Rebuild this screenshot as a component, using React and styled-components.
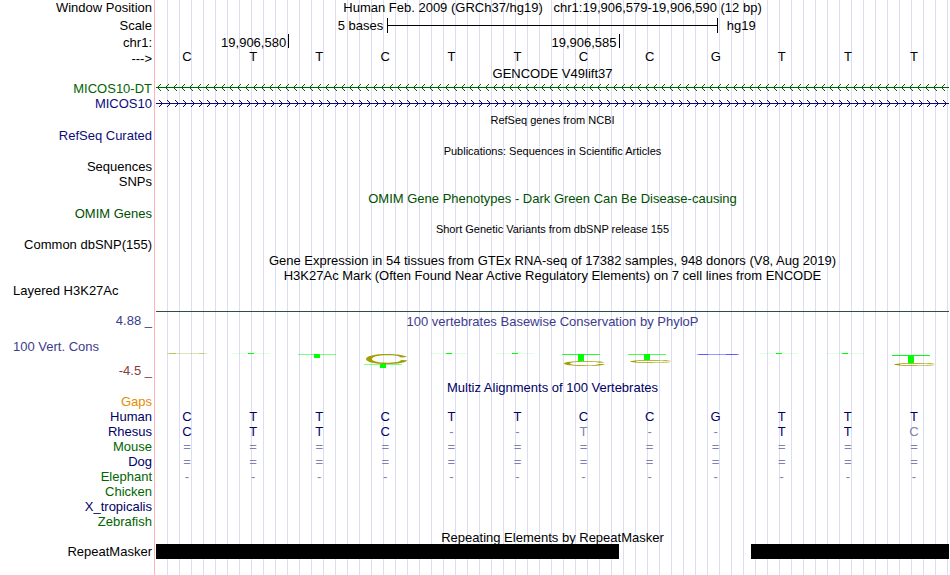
import React from "react";
import styled, { createGlobalStyle } from "styled-components";

const GlobalStyle = createGlobalStyle`
  * { box-sizing: border-box; }
  body {
    margin: 0;
    background: #fff;
    color: #000;
    font-family: "Liberation Sans", Arial, Helvetica, sans-serif;
    font-size: 13px;
    line-height: 15px;
  }
`;

const navy = "#0c0c78";
const green = "#006400";
const alignNavy = "#000064";
const slate = "#3c3c8c";
const muted = "#8080b2";

const Browser = styled.main`
  min-height: 100vh;
  padding: 0 1px 16px 0;
  background:
    linear-gradient(#ffb4b4, #ffb4b4) 154px 0 / 1px 100% no-repeat,
    linear-gradient(#fff, #fff) 0 0 / 156px 100% no-repeat,
    repeating-linear-gradient(to right, #fff 0 11px, #dcdcf5 11px 12px);
`;

const Row = styled.section`
  display: grid;
  grid-template-columns: 156px minmax(0, 1fr);
  height: ${(p) => p.$height || 15}px;
  align-items: center;
`;

const Label = styled.div`
  padding: ${(p) => (p.$left ? "0 0 2px 13px" : "0 4px 2px 0")};
  text-align: ${(p) => (p.$left ? "left" : "right")};
  color: ${(p) => p.$color || "#000"};
  white-space: nowrap;
`;

const RulerLabel = styled(Label)`
  padding-bottom: 0;
`;

const Title = styled.h2`
  grid-column: 2;
  margin: 0;
  font-weight: 400;
  font-size: ${(p) => (p.$small ? 11 : 13)}px;
  color: ${(p) => p.$color || "#000"};
  text-align: center;
  white-space: pre;
`;

const Position = styled(Title)`
  align-self: start;
`;

const Track = styled.div`
  display: grid;
  grid-template-columns: repeat(24, minmax(0, 1fr));
  height: 100%;
  align-items: ${(p) => p.$align || "center"};
`;

const ScaleText = styled.span`
  grid-column: span 7;
  padding: ${(p) => (p.$end ? "0 0 0 9px" : "0 4px 0 0")};
  text-align: ${(p) => (p.$end ? "left" : "right")};
`;

const ScaleBar = styled.span`
  grid-column: span 10;
  display: flex;
  align-items: center;
  height: 15px;
  border: solid #000;
  border-width: 0 1px;

  &::before {
    content: "";
    flex: 1;
    height: 1px;
    background: #000;
  }
`;

const Tick = styled.span`
  grid-column: span ${(p) => p.$span};
  height: 14px;
  line-height: 17px;
  margin-right: -1px;
  padding-right: 2px;
  border-right: 1px solid #000;
  text-align: right;
`;

const Bases = styled.div`
  display: grid;
  grid-template-columns: repeat(12, minmax(0, 1fr));
  height: 100%;
`;

const Base = styled.span`
  padding-right: 4px;
  line-height: 14px;
  text-align: center;
`;

const Strand = styled.svg`
  display: block;
  align-self: start;
  width: 100%;
  height: 15px;
`;

const Conservation = styled.section`
  display: grid;
  grid-template-columns: 156px minmax(0, 1fr);
  margin-top: 13px;
`;

const Limits = styled.div`
  display: grid;
  grid-template-rows: 20px 32px 17px;
  align-items: center;
`;

const Plot = styled.div`
  border-top: 1px solid #2f4f4f;
  padding-top: 2px;
`;

const Logo = styled.svg`
  display: block;
  width: 100%;
  height: 51px;
`;

const Alignment = styled.table`
  width: 100%;
  table-layout: fixed;
  border-collapse: collapse;
  line-height: 13px;
`;

const Species = styled.th`
  width: 156px;
  height: 15px;
  padding: 0 4px 0 0;
  font-weight: 400;
  text-align: right;
  vertical-align: top;
  color: ${(p) => p.$color};
`;

const Cell = styled.td`
  height: 15px;
  padding: 0 4px 0 0;
  text-align: center;
  vertical-align: top;
  color: ${(p) => (p.$muted ? muted : alignNavy)};
`;

const Repeat = styled.span`
  grid-column: ${(p) => p.$column};
  height: 15px;
  background: #000;
`;

const sequence = [..."CTTCTTCCGTTT"];

const species = [
  { name: "Gaps", color: "#e68c00", bases: "" },
  { name: "Human", color: alignNavy, bases: "CTTCTTCCGTTT" },
  { name: "Rhesus", color: alignNavy, bases: "CTTC--T--TTC", differs: [6, 11] },
  { name: "Mouse", color: green, bases: "============" },
  { name: "Dog", color: alignNavy, bases: "============" },
  { name: "Elephant", color: green, bases: "------------" },
  { name: "Chicken", color: green, bases: "" },
  { name: "X_tropicalis", color: alignNavy, bases: "" },
  { name: "Zebrafish", color: green, bases: "" },
];

const arrows = {
  left: "M1 6h1v1h-1zM2 5h1v1h-1zM2 7h1v1h-1zM3 4h1v1h-1zM3 8h1v1h-1zM4 3h1v1h-1zM4 9h1v1h-1z",
  right: "M6 7h1v1h-1zM5 6h1v1h-1zM5 8h1v1h-1zM4 5h1v1h-1zM4 9h1v1h-1zM3 4h1v1h-1zM3 10h1v1h-1z",
};

function Gene({ name, color, direction }) {
  const id = `strand-${direction}`;
  const isLeft = direction === "left";
  return (
    <Row $height={isLeft ? 15 : 16}>
      <Label $color={color}>{name}</Label>
      <Strand aria-hidden="true" shapeRendering="crispEdges">
        <defs>
          <pattern id={id} width="8" height="15" patternUnits="userSpaceOnUse">
            <path d={arrows[direction]} fill={color} />
          </pattern>
        </defs>
        <rect width="100%" height="15" fill={`url(#${id})`} />
        <rect y={isLeft ? 6 : 7} width="100%" height="1" fill={color} />
      </Strand>
    </Row>
  );
}

/* A T score: a thin crossbar with a stem hanging below it. */
function ThymineMark({ x, y, stem, opacity }) {
  return (
    <g fill="#00ff00">
      <rect x={x} y={y} width="38" height="1" opacity={opacity} />
      <rect x={x + 16} y={y} width="6" height={stem} />
    </g>
  );
}

/* A C score: a wide flat ring open on the right. */
function CytosineMark({ x, y, height }) {
  const h = height;
  const t = h > 7 ? 1.3 : 0.8;
  const d = [
    `M${x + 41} ${y + h * 0.3}`,
    `C${x + 38} ${y + h * 0.1} ${x + 31} ${y} ${x + 21} ${y}`,
    `C${x + 9} ${y} ${x} ${y + h * 0.2} ${x} ${y + h / 2}`,
    `C${x} ${y + h * 0.8} ${x + 9} ${y + h} ${x + 21} ${y + h}`,
    `C${x + 32} ${y + h} ${x + 40} ${y + h * 0.88} ${x + 41} ${y + h * 0.62}`,
    `L${x + 35} ${y + h * 0.6}`,
    `C${x + 34} ${y + h * 0.8} ${x + 29} ${y + h - t} ${x + 21} ${y + h - t}`,
    `C${x + 11} ${y + h - t} ${x + 6} ${y + h * 0.7} ${x + 6} ${y + h / 2}`,
    `C${x + 6} ${y + h * 0.3} ${x + 11} ${y + t} ${x + 21} ${y + t}`,
    `C${x + 29} ${y + t} ${x + 33} ${y + h * 0.2} ${x + 35} ${y + h * 0.36}Z`,
  ].join("");
  return <path d={d} fill="#a0a000" />;
}

function ConservationLogo() {
  return (
    <Logo viewBox="0 -1 793 51" preserveAspectRatio="none" role="img" aria-label="PhyloP scores per base">
      <rect x="11" y="23" width="40" height="1" fill="#a0a000" opacity="0.3" />
      <rect x="13" y="23" width="7" height="1" fill="#a0a000" opacity="0.5" />
      <rect x="43" y="23" width="5" height="1" fill="#a0a000" opacity="0.3" />
      {[76, 274, 340, 604, 670].map((x) => (
        <ThymineMark key={x} x={x} y={23} stem={1} opacity={0.12} />
      ))}
      <ThymineMark x={142} y={24} stem={4} opacity={0.5} />
      <CytosineMark x={210} y={24} height={10} />
      <ThymineMark x={208} y={34} stem={4} opacity={0.5} />
      <ThymineMark x={406} y={24} stem={7} opacity={0.85} />
      <CytosineMark x={408} y={31} height={5} />
      <ThymineMark x={472} y={24} stem={6} opacity={0.7} />
      <CytosineMark x={474} y={30} height={3} />
      <rect x="541" y="24" width="42" height="1" fill="#0000ff" opacity="0.4" />
      <rect x="543" y="24" width="9" height="1" fill="#0000ff" opacity="0.4" />
      <rect x="570" y="24" width="11" height="1" fill="#0000ff" opacity="0.4" />
      <ThymineMark x={736} y={25} stem={8} opacity={1} />
      <CytosineMark x={738} y={33} height={3} />
    </Logo>
  );
}

export default function App() {
  return (
    <>
      <GlobalStyle />
      <Browser>
        <Row $height={17}>
          <Label>Window Position</Label>
          <Position>{"Human Feb. 2009 (GRCh37/hg19)   chr1:19,906,579-19,906,590 (12 bp)"}</Position>
        </Row>
        <Row $height={17}>
          <RulerLabel>Scale</RulerLabel>
          <Track>
            <ScaleText>5 bases</ScaleText>
            <ScaleBar />
            <ScaleText $end>hg19</ScaleText>
          </Track>
        </Row>
        <Row $height={16}>
          <RulerLabel>chr1:</RulerLabel>
          <Track $align="start">
            <Tick $span={4}>19,906,580</Tick>
            <Tick $span={10}>19,906,585</Tick>
          </Track>
        </Row>
        <Row $height={16}>
          <RulerLabel>---&gt;</RulerLabel>
          <Bases>
            {sequence.map((base, i) => <Base key={i}>{base}</Base>)}
          </Bases>
        </Row>
        <Row><Title>GENCODE V49lift37</Title></Row>
        <Gene name="MICOS10-DT" color={green} direction="left" />
        <Gene name="MICOS10" color={navy} direction="right" />
        <Row $height={16}><Title $small>RefSeq genes from NCBI</Title></Row>
        <Row><Label $color={navy}>RefSeq Curated</Label></Row>
        <Row $height={16}><Title $small>Publications: Sequences in Scientific Articles</Title></Row>
        <Row><Label>Sequences</Label></Row>
        <Row $height={16}><Label>SNPs</Label></Row>
        <Row $height={16}>
          <Title $color="#005000">OMIM Gene Phenotypes - Dark Green Can Be Disease-causing</Title>
        </Row>
        <Row><Label $color="#005000">OMIM Genes</Label></Row>
        <Row $height={16}><Title $small>Short Genetic Variants from dbSNP release 155</Title></Row>
        <Row><Label>Common dbSNP(155)</Label></Row>
        <Row $height={16}>
          <Title>Gene Expression in 54 tissues from GTEx RNA-seq of 17382 samples, 948 donors (V8, Aug 2019)</Title>
        </Row>
        <Row><Title>H3K27Ac Mark (Often Found Near Active Regulatory Elements) on 7 cell lines from ENCODE</Title></Row>
        <Row><Label $left>Layered H3K27Ac</Label></Row>
        <Conservation>
          <Limits>
            <Label $color={slate}>4.88 _</Label>
            <Label $left $color={slate}>100 Vert. Cons</Label>
            <Label $color="#8c3c3c">-4.5 _</Label>
          </Limits>
          <Plot>
            <Title $color={slate}>100 vertebrates Basewise Conservation by PhyloP</Title>
            <ConservationLogo />
          </Plot>
        </Conservation>
        <Row><Title $color={alignNavy}>Multiz Alignments of 100 Vertebrates</Title></Row>
        <Alignment aria-label="Multiz Alignments of 100 Vertebrates">
          <tbody>
            {species.map(({ name, color, bases, differs = [] }) => (
              <tr key={name}>
                <Species scope="row" $color={color}>{name}</Species>
                {sequence.map((_, i) => (
                  <Cell key={i} $muted={differs.includes(i) || "-=".includes(bases[i] || "-")}>
                    {bases[i]}
                  </Cell>
                ))}
              </tr>
            ))}
          </tbody>
        </Alignment>
        <Row $height={14}><Title>Repeating Elements by RepeatMasker</Title></Row>
        <Row>
          <RulerLabel>RepeatMasker</RulerLabel>
          <Track>
            <Repeat $column="1 / 15" />
            <Repeat $column="19 / 25" />
          </Track>
        </Row>
      </Browser>
    </>
  );
}
